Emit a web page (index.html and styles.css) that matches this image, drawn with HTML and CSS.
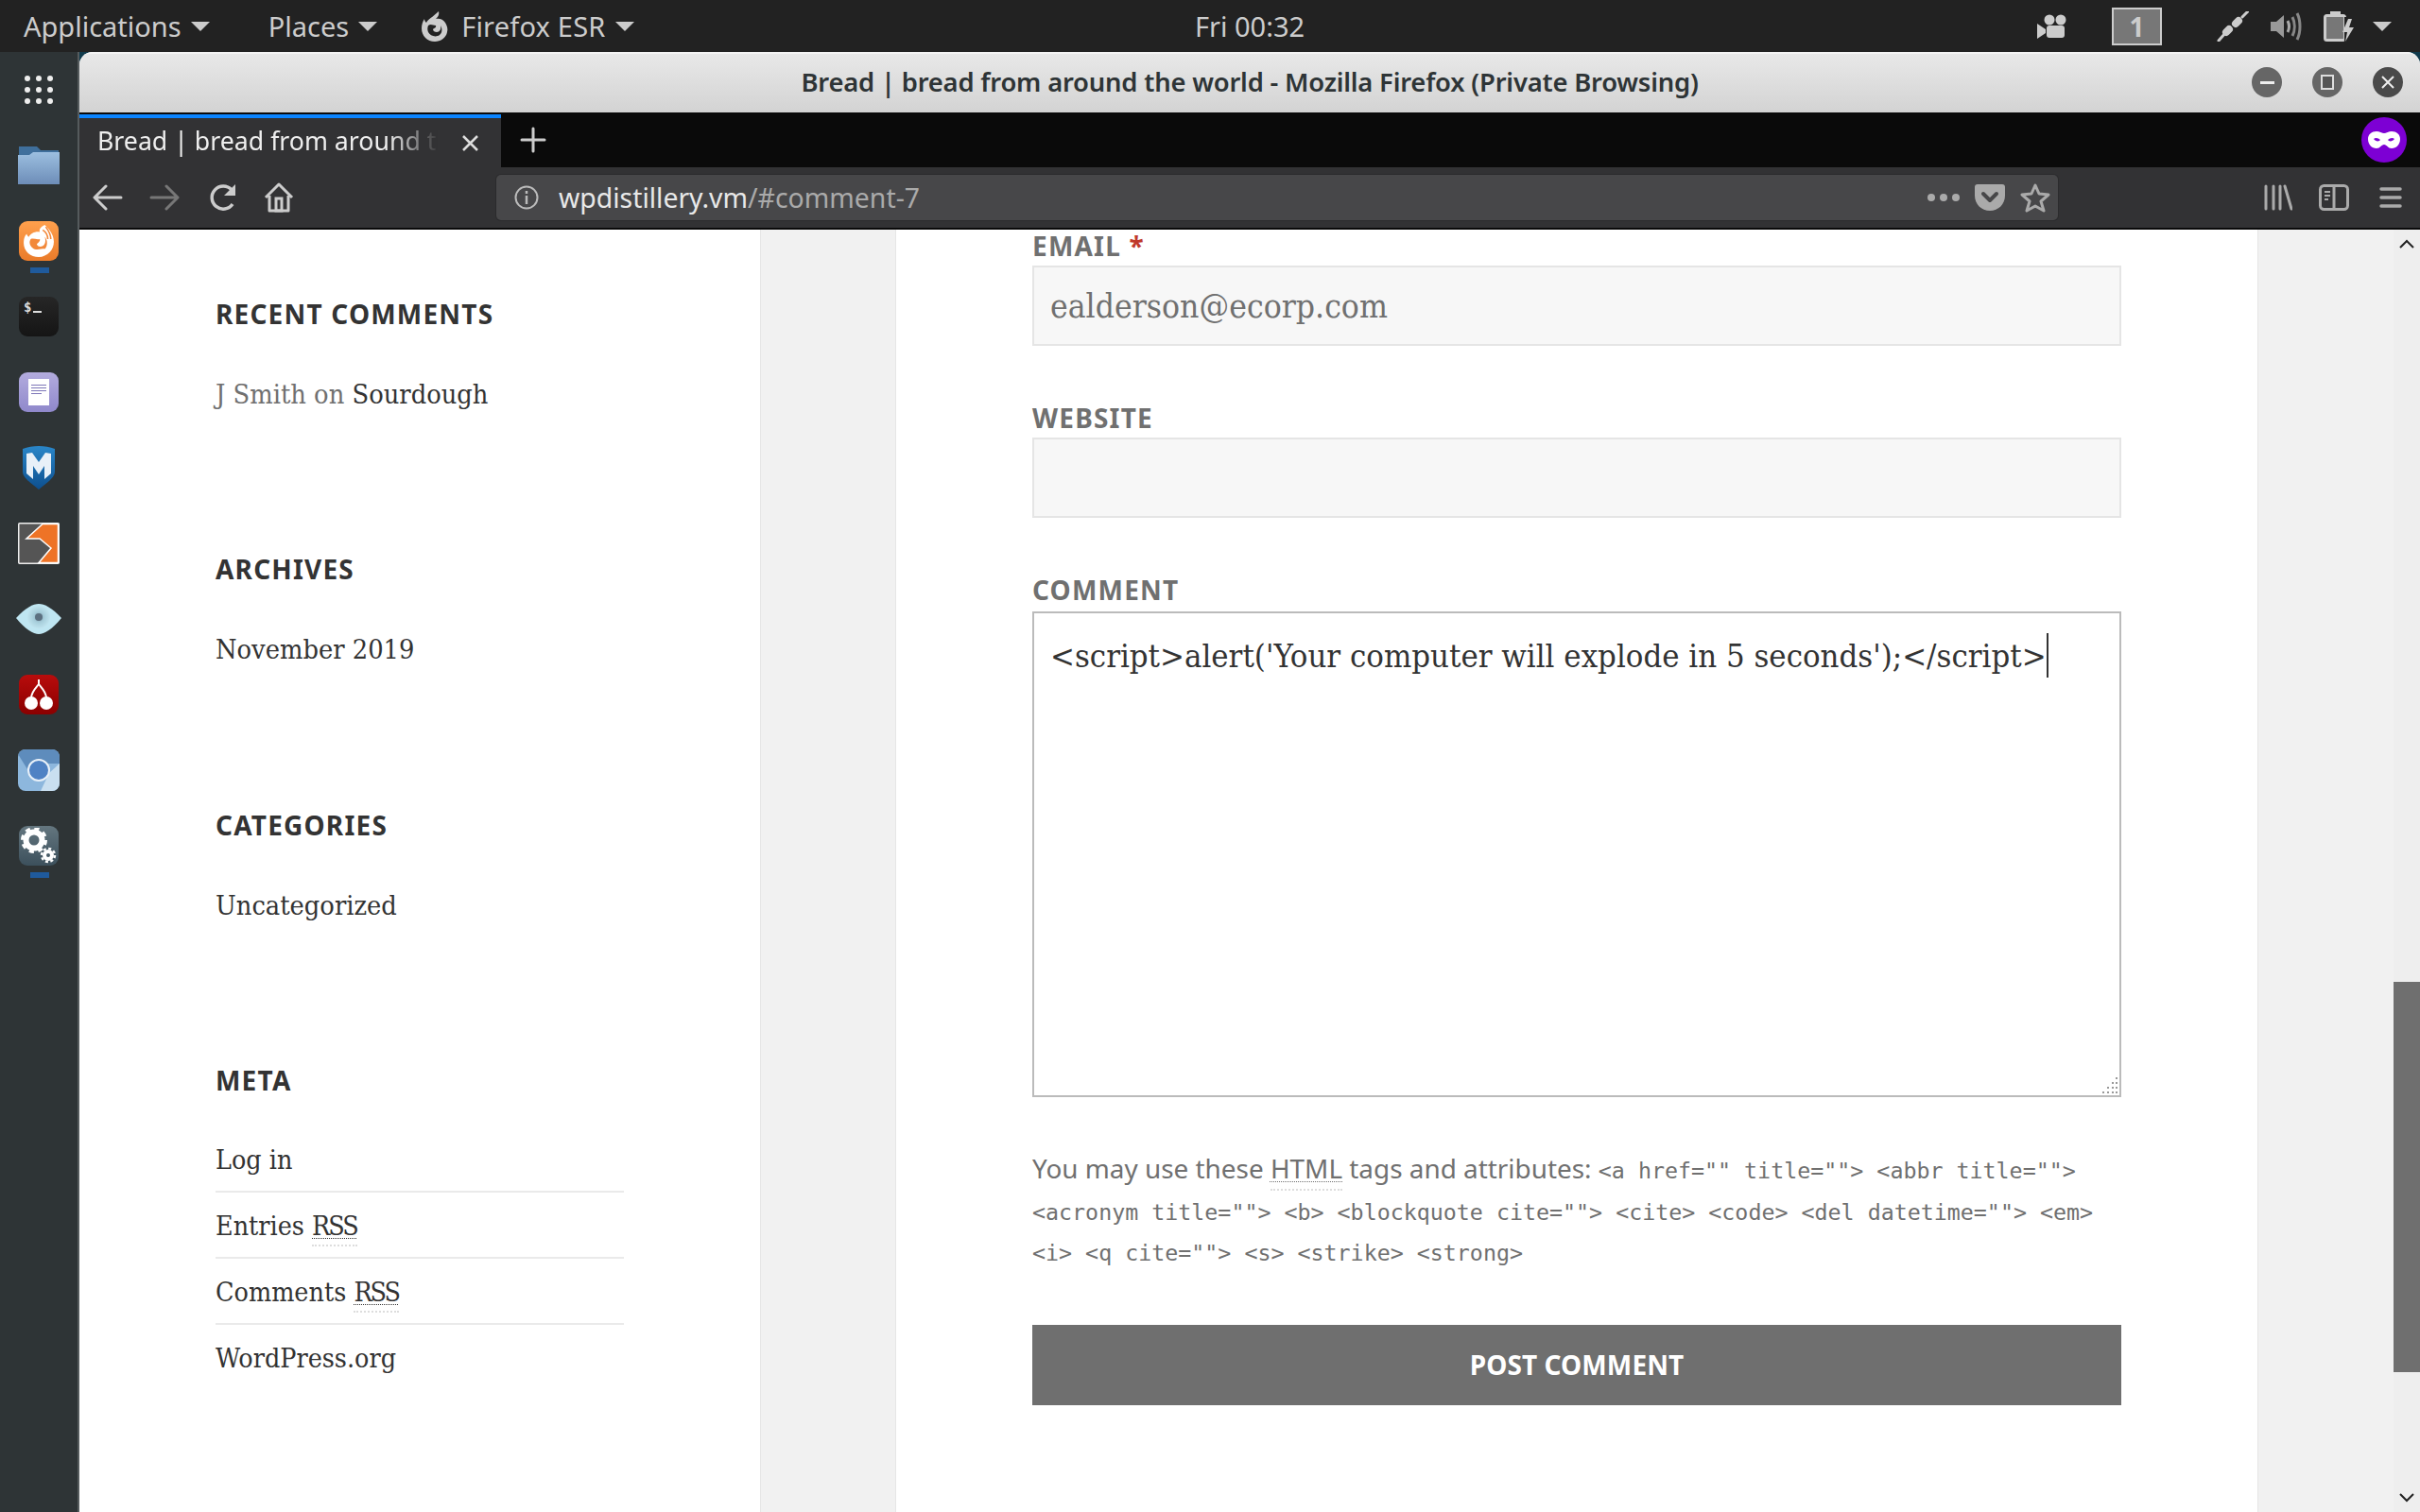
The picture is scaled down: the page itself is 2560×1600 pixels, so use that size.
FILE: index.html
```html
<!DOCTYPE html>
<html lang="en">
<head>
<meta charset="utf-8">
<title>Bread | bread from around the world - Mozilla Firefox (Private Browsing)</title>
<link rel="stylesheet" href="styles.css">
</head>
<body>
<header class="panel">
  <div class="panel-left">
    <span class="pitem pitem-apps">Applications<i class="caret"></i></span>
    <span class="pitem pitem-places">Places<i class="caret"></i></span>
    <svg class="pfox" width="32" height="32" viewBox="0 0 32 32"><path fill="#ccc" d="M20 0c1 4-1 6-3 8 3-1 8 0 10 4 2 3 3 7 2 10-1 6-7 10-13 10C8 32 2 26 2 18c0-4 1-7 3-10 0 2 1 3 2 4 2-4 7-6 13-12z"/><path fill="#222" d="M9 15c3-2 5 0 8 0 1 2-2 3-3 4 0 2 2 3 4 3 3 0 5-3 4-7 2 3 2 8-1 10-4 3-10 1-12-3-1-2-1-5 0-7z"/></svg>
    <span class="pitem pitem-ff">Firefox ESR<i class="caret"></i></span>
  </div>
  <div class="clock">Fri 00:32</div>
  <div class="panel-right">
    <svg class="tray-cam" width="31" height="26" viewBox="0 0 31 26"><circle cx="13" cy="6" r="5.5" fill="#ccc"/><circle cx="25" cy="6" r="5.5" fill="#ccc"/><rect x="10" y="12" width="19" height="13" rx="3" fill="#ccc"/><path fill="#ccc" d="M0 10l9 6v4l-9 6z"/></svg>
    <div class="workspace">1</div>
    <svg class="tray-plug" width="34" height="32" viewBox="0 0 34 32"><path stroke="#ccc" stroke-width="3" stroke-linecap="round" d="M2 31l7-8M27 6l6-6"/><path stroke="#ccc" stroke-width="8" stroke-linecap="round" d="M10 22l3-3M20 13l3-3"/></svg>
    <svg class="tray-vol" width="33" height="32" viewBox="0 0 33 32"><path fill="#999" d="M0 11h6l8-7v24l-8-7H0z"/><path fill="none" stroke="#aaa" stroke-width="3" d="M18 10c2 4 2 8 0 12"/><path fill="none" stroke="#888" stroke-width="3" d="M23 6c3 6 3 14 0 20M28 2c4 8 4 20 0 28"/></svg>
    <svg class="tray-bat" width="32" height="32" viewBox="0 0 32 32"><rect x="7" y="0" width="11" height="4" fill="#ccc"/><rect x="1.500" y="4.500" width="21" height="26" rx="2" fill="#777" stroke="#ccc" stroke-width="3"/><path fill="#222" d="M22 6h10v26H22z"/><path fill="#ccc" d="M26 8l-6 14h5l-2 10 9-15h-5l3-9z"/></svg>
    <i class="caret caret-tray"></i>
  </div>
</header>

<div class="desktop">
  <nav class="dock">
    <div class="dock-item"><svg width="36" height="36" viewBox="0 0 36 36" fill="#eee"><circle cx="6" cy="6" r="3"/><circle cx="18" cy="6" r="3"/><circle cx="30" cy="6" r="3"/><circle cx="6" cy="18" r="3"/><circle cx="18" cy="18" r="3"/><circle cx="30" cy="18" r="3"/><circle cx="6" cy="30" r="3"/><circle cx="18" cy="30" r="3"/><circle cx="30" cy="30" r="3"/></svg></div>
    <div class="dock-item"><svg width="44" height="40" viewBox="0 0 44 40"><defs><linearGradient id="fg" x1="0" y1="0" x2="0" y2="1"><stop offset="0" stop-color="#9cbfe0"/><stop offset="1" stop-color="#6d8db8"/></linearGradient></defs><path fill="#3f6f9c" d="M1 0h19l4 4h19v10H1z"/><path fill="url(#fg)" d="M0 40V9h12l4-3h28v34z"/></svg></div>
    <div class="dock-item dock-on"><div class="tile tile-orange"><svg width="34" height="34" viewBox="0 0 32 32"><path fill="#fff" d="M22 0c3 3 6 6 8 11 2 6 1 12-3 16-3 3-7 5-11 5C8 32 1 26 1 18c0-4 1-7 3-9 0 1 1 2 2 3 2-4 7-6 11-5-1-3 1-5 5-7z"/><path fill="#f2883a" d="M8 14c3-1 6 1 9 0 1 2-2 4-3 5 1 3 4 3 6 2 3-2 3-6 2-9 3 3 3 9 0 12-1-1-9 2-12-1-3-2-4-6-2-9z"/><path fill="none" stroke="#f2883a" stroke-width="1.500" d="M23 2c3 4 5 7 5 12M20 5c3 2 5 5 5 9"/></svg></div></div>
    <div class="dock-item"><div class="tile tile-term"><span class="prompt">$</span><span class="cursor-bar"></span></div></div>
    <div class="dock-item"><div class="tile tile-notes"><div class="sheet"><i></i><i></i><i></i><i class="short"></i></div></div></div>
    <div class="dock-item"><svg width="34" height="46" viewBox="0 0 34 46"><defs><linearGradient id="mg" x1="0" y1="0" x2="0" y2="1"><stop offset="0" stop-color="#2a86c8"/><stop offset="1" stop-color="#0d4f8f"/></linearGradient></defs><path fill="url(#mg)" d="M0 3c10-4 24-4 34 0v24c0 7-10 13-17 19C10 40 0 34 0 27z"/><path fill="#e8f0f8" d="M4 8l6-1 7 10 7-10 6 1v21l-7 6V21l-6 9-6-9v14l-7-6z"/></svg></div>
    <div class="dock-item"><svg width="44" height="44" viewBox="0 0 44 44"><rect x=".750" y=".750" width="42.500" height="42.500" rx="1" fill="#555" stroke="#eee" stroke-width="1.500"/><path fill="#ee7326" stroke="#fff" stroke-width="1.500" d="M26 1.500L9 17h14l12 10-13 15.500h20.500v-41z"/></svg></div>
    <div class="dock-item"><svg width="48" height="34" viewBox="0 0 48 34"><defs><radialGradient id="eg"><stop offset="0" stop-color="#7f9fb0"/><stop offset=".5" stop-color="#a8cfdc"/><stop offset="1" stop-color="#bfe3ee"/></radialGradient></defs><path fill="#bfe6f2" d="M0 16C10 5 18 1 24 1s14 4 24 15C38 28 30 33 24 33S10 28 0 16z"/><circle cx="24" cy="15" r="12" fill="url(#eg)"/><circle cx="24" cy="15" r="4" fill="#5c7080"/></svg></div>
    <div class="dock-item"><div class="tile tile-cherry"><svg width="30" height="32" viewBox="0 0 30 32" fill="#fff"><circle cx="7" cy="25" r="7"/><circle cx="23" cy="25" r="7"/><path fill="none" stroke="#fff" stroke-width="2" d="M15 0v5M15 5C12 9 8 12 7 19M15 5c3 4 7 7 8 14"/></svg></div></div>
    <div class="dock-item"><svg width="44" height="44" viewBox="0 0 44 44"><defs><clipPath id="cr"><rect width="44" height="44" rx="8"/></clipPath></defs><g clip-path="url(#cr)"><rect width="44" height="44" fill="#8db7dd"/><path fill="#c9dff0" d="M24 44l9-19 11-10v29z"/><path fill="#5e8cbc" d="M0 0h44v15H22L10 21 0 5z"/><circle cx="22" cy="22" r="11" fill="#4f82c4" stroke="#e8f0f8" stroke-width="2"/></g></svg></div>
    <div class="dock-item dock-on"><div class="tile tile-gear"><svg width="38" height="38" viewBox="0 0 38 38"><circle cx="14" cy="13" r="8.500" fill="none" stroke="#fff" stroke-width="6"/><circle cx="14" cy="13" r="12" fill="none" stroke="#fff" stroke-width="4" stroke-dasharray="5 4.420"/><circle cx="29" cy="29" r="4" fill="none" stroke="#fff" stroke-width="4"/><circle cx="29" cy="29" r="7" fill="none" stroke="#fff" stroke-width="2.500" stroke-dasharray="3 2.500"/></svg></div></div>
  </nav>

  <main class="window">
    <div class="titlebar">
      <div class="title">Bread | bread from around the world - Mozilla Firefox (Private Browsing)</div>
      <div class="wbtns">
        <span class="wbtn wbtn-min"><i class="min-bar"></i></span>
        <span class="wbtn wbtn-max"><i class="max-box"></i></span>
        <span class="wbtn wbtn-close"><svg width="14" height="14" viewBox="0 0 14 14"><path stroke="#eee" stroke-width="2" d="M1 1l12 12M13 1L1 13"/></svg></span>
      </div>
    </div>

    <div class="tabbar">
      <div class="tab">
        <span class="tab-text">Bread | bread from around the world</span>
        <svg class="tab-x" width="19" height="19" viewBox="0 0 19 19"><path stroke="#ddd" stroke-width="2.500" d="M2 2l15 15M17 2L2 17"/></svg>
      </div>
      <svg class="newtab" width="28" height="28" viewBox="0 0 28 28"><path stroke="#ccc" stroke-width="3" stroke-linecap="round" d="M14 2v24M2 14h24"/></svg>
      <span class="mask"><svg width="34" height="18" viewBox="0 0 34 18"><path fill="#fff" fill-rule="evenodd" d="M9 0c3 0 6 2 8 2s5-2 8-2c5 0 9 3 9 8 0 6-4 10-9 10-4 0-5-4-8-4s-4 4-8 4c-5 0-9-4-9-10C0 3 4 0 9 0zM6 8c2 3 6 3 7 1-2-2-5-3-7-1zm22 0c-2-2-5-1-7 1 1 2 5 2 7-1z"/></svg></span>
    </div>

    <div class="navbar">
      <svg class="nav-back" width="32" height="28" viewBox="0 0 32 28"><path fill="none" stroke="#ccc" stroke-width="3" stroke-linecap="round" stroke-linejoin="round" d="M30 14H3M14 2L2 14l12 12"/></svg>
      <svg class="nav-fwd" width="32" height="28" viewBox="0 0 32 28"><path fill="none" stroke="#777" stroke-width="3" stroke-linecap="round" stroke-linejoin="round" d="M2 14h27M18 2l12 12-12 12"/></svg>
      <svg class="nav-reload" width="32" height="30" viewBox="0 0 32 30"><path fill="none" stroke="#ccc" stroke-width="3.500" d="M26 22a12 12 0 1 1-1-15"/><path fill="#ccc" d="M29 1v12H17z"/></svg>
      <svg class="nav-home" width="32" height="32" viewBox="0 0 32 32"><path fill="none" stroke="#ccc" stroke-width="3" stroke-linejoin="round" d="M2 16L16 2l14 14M6 14v16h20V14"/><rect x="13" y="17" width="6" height="13" fill="none" stroke="#ccc" stroke-width="3"/></svg>
      <div class="urlbar">
        <svg class="url-info" width="26" height="26" viewBox="0 0 26 26"><circle cx="13" cy="13" r="11.500" fill="none" stroke="#bbb" stroke-width="2"/><path stroke="#bbb" stroke-width="2.500" d="M13 11v9M13 6v3"/></svg>
        <span class="url-text"><b class="url-host">wpdistillery.vm</b>/#comment-7</span>
        <span class="url-dots"><i></i><i></i><i></i></span>
        <svg class="url-pocket" width="32" height="28" viewBox="0 0 32 28"><path fill="#aaa" d="M3 0h26c2 0 3 1 3 3v9c0 9-7 16-16 16S0 21 0 12V3c0-2 1-3 3-3z"/><path fill="none" stroke="#474749" stroke-width="4" stroke-linecap="round" stroke-linejoin="round" d="M9 10l7 7 7-7"/></svg>
        <svg class="url-star" width="32" height="32" viewBox="0 0 32 32"><path fill="none" stroke="#aaa" stroke-width="3" stroke-linejoin="round" d="M16 3l4 9 10 1-8 7 3 10-9-5-9 5 3-10-8-7 10-1z"/></svg>
      </div>
      <svg class="nav-lib" width="30" height="28" viewBox="0 0 30 28"><path stroke="#aaa" stroke-width="3" stroke-linecap="round" d="M2 2v24M10 2v24M17 2v24M22 2l7 24"/></svg>
      <svg class="nav-side" width="32" height="28" viewBox="0 0 32 28"><rect x="1.500" y="1.500" width="29" height="25" rx="4" fill="none" stroke="#aaa" stroke-width="3"/><path stroke="#aaa" stroke-width="3" d="M16 2v24"/><path stroke="#aaa" stroke-width="2" d="M6 8h6M6 12h6M6 16h4"/></svg>
      <svg class="nav-menu" width="24" height="24" viewBox="0 0 24 24"><path stroke="#aaa" stroke-width="3.500" stroke-linecap="round" d="M2 3h20M2 12h20M2 21h20"/></svg>
    </div>

    <div class="content">
      <aside class="sidebar">
        <section class="widget">
          <h2>Recent Comments</h2>
          <p class="muted">J Smith on <a>Sourdough</a></p>
        </section>
        <section class="widget">
          <h2>Archives</h2>
          <p><a>November 2019</a></p>
        </section>
        <section class="widget">
          <h2>Categories</h2>
          <p><a>Uncategorized</a></p>
        </section>
        <section class="widget">
          <h2>Meta</h2>
          <ul class="meta-list">
            <li>Log in</li>
            <li>Entries <abbr class="rss">RSS</abbr></li>
            <li>Comments <abbr class="rss">RSS</abbr></li>
            <li>WordPress.org</li>
          </ul>
        </section>
      </aside>
      <div class="gutter"></div>
      <section class="article">
        <form class="comment-form">
          <label class="label">Email <span class="req">*</span></label>
          <div class="field">ealderson@ecorp.com</div>
          <label class="label">Website</label>
          <div class="field"></div>
          <label class="label label-comment">Comment</label>
          <div class="textarea"><span class="ta-text">&lt;script&gt;alert('Your computer will explode in 5 seconds');&lt;/script&gt;</span><span class="caretline"></span>
            <svg class="grip" width="22" height="22" viewBox="0 0 22 22" fill="#999"><rect x="18" y="3" width="2" height="2"/><rect x="14" y="8" width="2" height="2"/><rect x="18" y="8" width="2" height="2"/><rect x="9" y="13" width="2" height="2"/><rect x="14" y="13" width="2" height="2"/><rect x="18" y="13" width="2" height="2"/><rect x="4" y="18" width="2" height="2"/><rect x="9" y="18" width="2" height="2"/><rect x="14" y="18" width="2" height="2"/><rect x="18" y="18" width="2" height="2"/></svg>
          </div>
          <p class="allowed">You may use these <abbr>HTML</abbr> tags and attributes: <code>&lt;a href="" title=""&gt; &lt;abbr title=""&gt; &lt;acronym title=""&gt; &lt;b&gt; &lt;blockquote cite=""&gt; &lt;cite&gt; &lt;code&gt; &lt;del datetime=""&gt; &lt;em&gt; &lt;i&gt; &lt;q cite=""&gt; &lt;s&gt; &lt;strike&gt; &lt;strong&gt;</code></p>
          <div class="submit">Post Comment</div>
        </form>
      </section>
      <div class="gutter gutter-right"></div>
      <div class="scrollbar">
        <svg class="sb-arrow" width="16" height="10" viewBox="0 0 16 10"><path fill="none" stroke="#222" stroke-width="2" d="M1 9l7-7 7 7"/></svg>
        <div class="sb-track"><div class="sb-thumb"></div></div>
        <svg class="sb-arrow" width="16" height="10" viewBox="0 0 16 10"><path fill="none" stroke="#222" stroke-width="2" d="M1 1l7 7 7-7"/></svg>
      </div>
    </div>
  </main>
</div>
</body>
</html>
```
FILE: styles.css
```css
* { box-sizing: border-box; }
html, body { margin: 0; height: 100%; overflow: hidden; }
body {
  width: 2560px; height: 1600px;
  display: flex; flex-direction: column;
  background: #222;
  font-family: "Noto Sans", sans-serif;
}
svg { display: block; flex: none; }

/* top panel */
.panel {
  height: 55px; flex: none; background: #222; color: #ccc;
  display: flex; align-items: center; font-size: 29px;
}
.panel-left { width: 1262px; display: flex; align-items: center; padding-left: 25px; }
.pitem { display: flex; align-items: center; white-space: nowrap; }
.caret {
  display: block; width: 0; height: 0; margin-left: 10px;
  border-left: 10px solid transparent; border-right: 10px solid transparent; border-top: 10px solid #ccc;
}
.pitem-places { margin-left: 62px; }
.pfox { margin-left: 45px; margin-right: 12px; }
.pitem-ff { letter-spacing: .2px; }
.clock { width: 120px; text-align: center; white-space: nowrap; }
.panel-right { margin-left: auto; display: flex; align-items: center; padding-right: 30px; }
.workspace {
  width: 53px; height: 40px; margin-left: 48px; background: #777; border: 2px solid #ccc;
  display: flex; align-items: center; justify-content: center; font-weight: 700; color: #ccc; font-size: 28px;
}
.tray-plug { margin-left: 58px; }
.tray-vol { margin-left: 23px; }
.tray-bat { margin-left: 23px; }
.caret-tray { margin-left: 20px; }

/* dock + window */
.desktop { flex: 1; display: flex; min-height: 0; background: #103a4c; }
.dock {
  width: 84px; flex: none; background: #2e3436; border-right: 2px solid #555b5d;
  display: flex; flex-direction: column;
}
.dock-item { height: 80px; flex: none; display: flex; align-items: center; justify-content: center; position: relative; }
.dock-on::after {
  content: ""; position: absolute; left: 32px; top: 68px; width: 20px; height: 6px; background: #1f5a9c;
}
.tile { width: 42px; height: 42px; border-radius: 9px; display: flex; align-items: center; justify-content: center; }
.tile-orange { background: linear-gradient(#ffa04d, #ea7b2a); }
.tile-term { background: linear-gradient(#262626, #151515); align-items: flex-start; justify-content: flex-start; padding: 3px 0 0 5px; gap: 2px; }
.prompt { font: 700 14px/16px "DejaVu Sans Mono", monospace; color: #ddd; }
.cursor-bar { display: block; width: 9px; height: 2px; margin-top: 12px; background: #ddd; }
.tile-notes { background: linear-gradient(#b3acde, #8f88cb); }
.sheet { width: 22px; height: 28px; background: #fff; padding: 6px 3px 0; display: flex; flex-direction: column; gap: 2px; }
.sheet i { display: block; height: 1px; background: #7d76b8; }
.sheet i.short { width: 70%; }
.tile-cherry { background: linear-gradient(#b80c0c, #8a0000); }
.tile-gear { background: linear-gradient(#64767f, #3c505c); }

.window {
  flex: 1; min-width: 0; display: flex; flex-direction: column;
  border-radius: 14px 14px 0 0; overflow: hidden; background: #fff;
}
.titlebar {
  height: 64px; flex: none; display: flex; align-items: center; justify-content: center; position: relative;
  background: linear-gradient(#e8e8e8, #d3d3d3); border-top: 2px solid #f4f4f4; padding-bottom: 4px;
}
.title { font-size: 27.400px; font-weight: 600; letter-spacing: -.2px; color: #2e3436; white-space: nowrap; }
.wbtns { position: absolute; top: 14px; right: 18px; display: flex; gap: 32px; }
.wbtn { width: 32px; height: 32px; border-radius: 50%; background: #666; display: flex; align-items: center; justify-content: center; }
.wbtn-close { background: #4a4a4a; }
.min-bar { display: block; width: 15px; height: 3px; background: #eee; }
.max-box { display: block; width: 14px; height: 16px; background: #555; border: 2px solid #ddd; }

.tabbar { height: 58px; flex: none; background: #0a0a0a; display: flex; align-items: center; position: relative; }
.tab {
  width: 446px; height: 56px; align-self: flex-end; background: #323234; border-top: 4px solid #0a84ff;
  display: flex; align-items: center; padding: 0 0 6px 19px; color: #eee; font-size: 26.700px;
}
.tab-text {
  width: 362px; overflow: hidden; white-space: nowrap;
  -webkit-mask-image: linear-gradient(90deg, #000 85%, transparent 100%);
  mask-image: linear-gradient(90deg, #000 85%, transparent 100%);
}
.tab-x { margin-left: 23px; margin-top: 6px; }
.newtab { margin-left: 20px; }
.mask {
  width: 48px; height: 48px; border-radius: 50%; background: #7d00d4; position: absolute; right: 14px; top: 5px;
  display: flex; align-items: center; justify-content: center;
}

.navbar {
  height: 66px; flex: none; background: #323234; border-bottom: 2px solid #0a0a0a;
  display: flex; align-items: center; padding-left: 14px;
}
.nav-fwd { margin-left: 28px; }
.nav-reload { margin-left: 30px; }
.nav-home { margin-left: 27px; }
.urlbar {
  width: 1652px; height: 48px; margin-left: 214px; background: #474749; border-radius: 5px;
  box-shadow: 0 0 0 1px #2b2b2d;
  display: flex; align-items: center; padding-left: 19px; font-size: 28.400px; color: #aaa;
}
.url-text { margin-left: 21px; white-space: nowrap; }
.url-host { font-weight: 400; color: #e8e8e8; }
.url-dots { margin-left: auto; display: flex; gap: 5px; }
.url-dots i { display: block; width: 8px; height: 8px; border-radius: 50%; background: #aaa; }
.url-pocket { margin-left: 16px; }
.url-star { margin-left: 16px; margin-right: 8px; }
.nav-lib { margin-left: 218px; }
.nav-side { margin-left: 28px; }
.nav-menu { margin-left: 32px; }

/* page */
.content {
  flex: 1; min-height: 0; overflow: hidden; display: grid;
  grid-template-columns: 720px 144px 1440px 144px 28px;
  font-family: "DejaVu Serif", serif; font-stretch: condensed; color: #333;
}
.sidebar { padding: 69px 0 0 144px; background: #fff; }
.widget { height: 270.4px; }
.widget h2 {
  margin: 0 0 45px; font: 700 28px/40px "Noto Sans", sans-serif; letter-spacing: 1.2px; text-transform: uppercase; color: #333;
}
.widget p { margin: 0; font-size: 28.700px; line-height: 40px; }
.muted { color: #707070; }
.widget a { color: #333; }
.meta-list { list-style: none; margin: 0; padding: 0; width: 432px; font-size: 28.400px; line-height: 40px; }
.meta-list li { padding: 16px 0 12px; border-bottom: 2px solid #eaeaea; }
.meta-list li:first-child { padding-top: 0; }
.meta-list li:last-child { border-bottom: 0; }
abbr { border-bottom: 2px dotted #ddd; padding-bottom: 3px; text-decoration: underline dotted 1px; text-underline-offset: 3px; }
.rss { letter-spacing: -2px; }
.gutter { background: #f1f1f1; border-left: 1px solid #e6e6e6; border-right: 1px solid #e6e6e6; }
.gutter-right { background: #f1f1f1; border-right: 0; }
.article { background: #fff; padding-left: 144px; }
.comment-form { width: 1152px; padding-top: 0; }
.label {
  display: block; height: 34px; margin-bottom: 4px;
  font: 700 28px/34px "Noto Sans", sans-serif; letter-spacing: 1.2px; text-transform: uppercase; color: #707070;
}
.label-comment { margin-bottom: 6px; margin-top: 2px; }
.req { color: #c0392b; }
.field {
  height: 85px; margin-bottom: 59px; padding: 0 17px; background: #f7f7f7; border: 2px solid #e5e5e5;
  font-size: 35.200px; line-height: 82px; color: #707070;
}
.textarea {
  height: 514px; border: 2px solid #bbb; background: #fff; padding: 21px 17px 0; position: relative;
  font-size: 34.400px; line-height: 49px; color: #333; white-space: nowrap;
}
.caretline { display: inline-block; width: 2px; height: 47px; background: #333; vertical-align: top; }
.grip { position: absolute; right: 0; bottom: 0; }
.allowed {
  margin: 54px 0 56px; font-size: 27.900px; line-height: 43.500px; color: #707070; font-family: "Noto Sans", sans-serif;
}
.allowed abbr { text-decoration-thickness: 1px; }
.allowed code { font: 23.300px "DejaVu Sans Mono", monospace; }
.submit {
  height: 85px; background: #6f6f6f; color: #fff; display: flex; align-items: center; justify-content: center;
  font: 700 28px "Noto Sans", sans-serif; letter-spacing: .1px; text-transform: uppercase;
}
.scrollbar { background: #eee; display: flex; flex-direction: column; align-items: center; padding: 10px 0; }
.sb-arrow { flex: none; }
.sb-track { flex: 1; width: 28px; margin: 0; padding-top: 776px; }
.sb-thumb { height: 413px; background: #6f6f6f; }
```
